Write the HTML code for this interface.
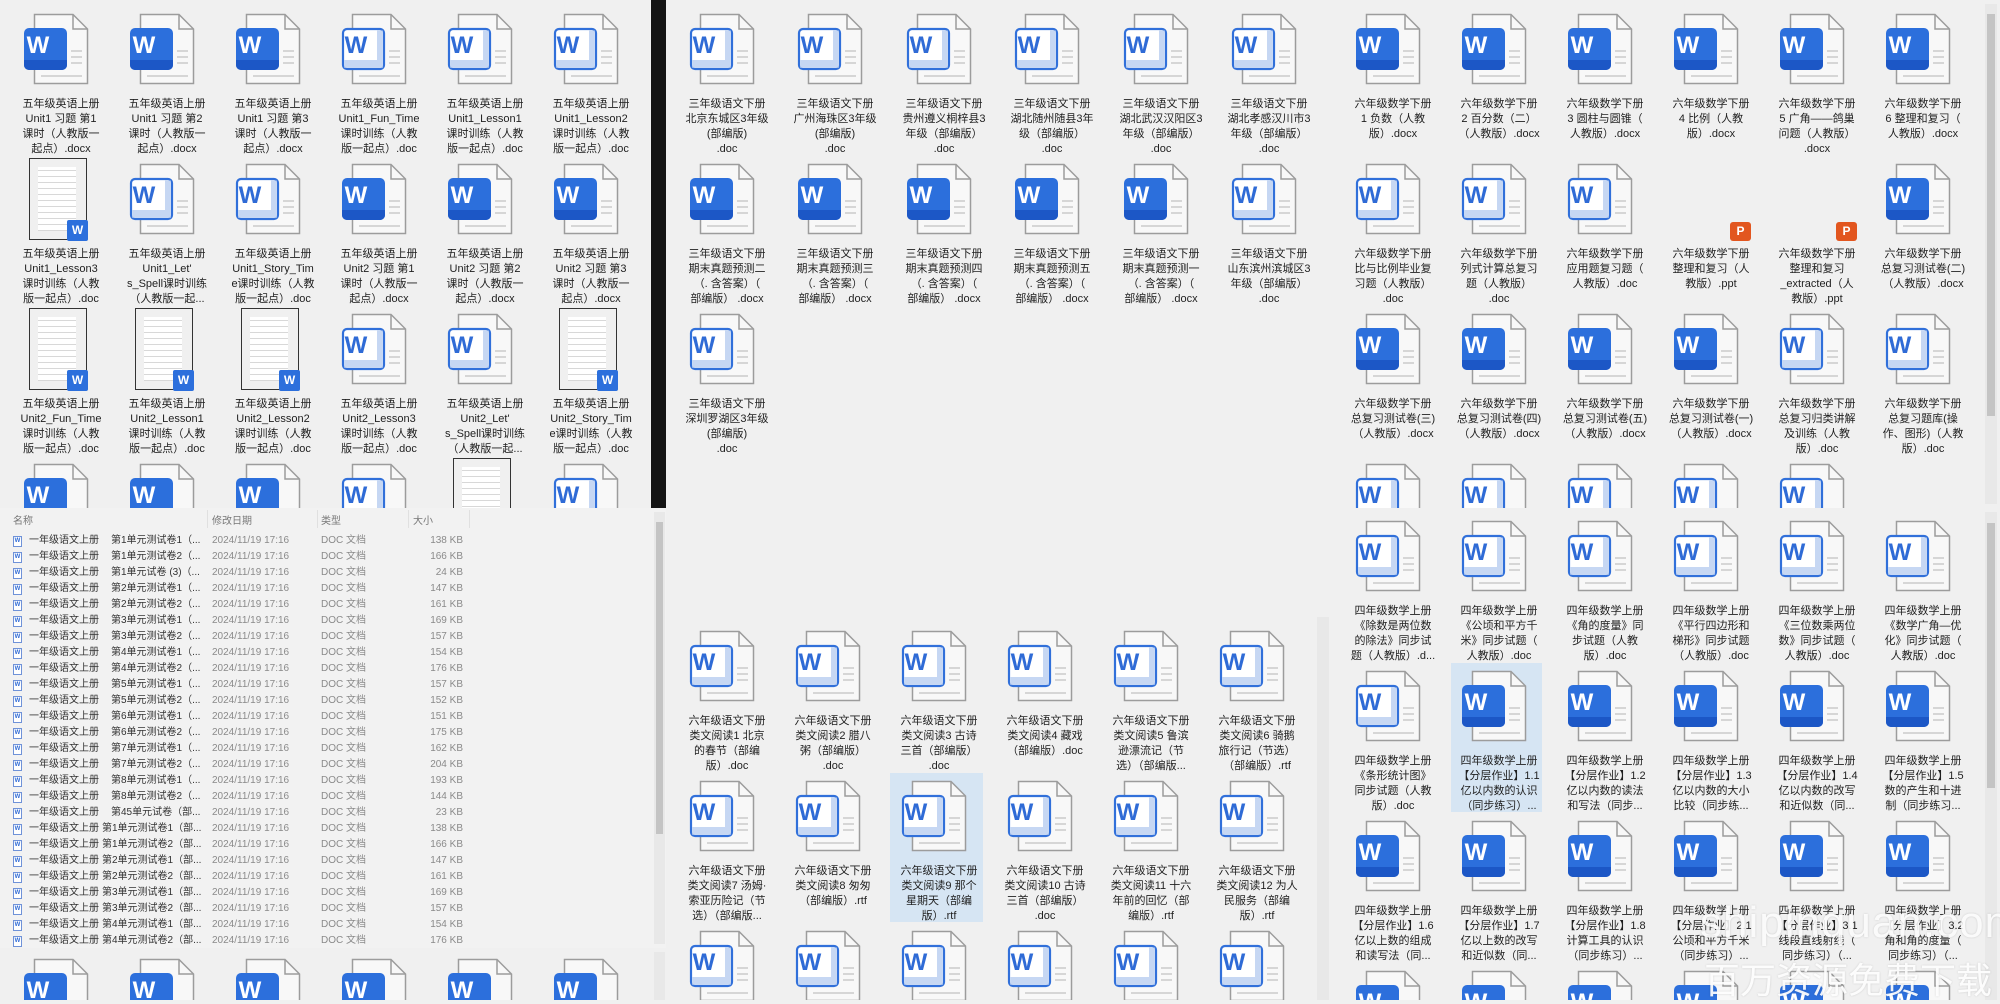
<!DOCTYPE html>
<html><head><meta charset="utf-8">
<style>
*{margin:0;padding:0;box-sizing:border-box}
html,body{width:2000px;height:1000px;overflow:hidden;background:#f0f0f0;font-family:"Liberation Sans","Noto Sans CJK SC",sans-serif}
.c{position:absolute;overflow:hidden;background:#f0f0f0}
.t{position:absolute;width:106px;height:150px}
.i{position:absolute;left:15px;top:0;width:66px;height:72px;overflow:visible}
.pg{fill:#f8f8f8;stroke:#9c9c9c;stroke-width:1.5}
.fd{fill:none;stroke:#9c9c9c;stroke-width:1.5}
.ln{stroke:#d6d6d6;stroke-width:2}
.w1{font:bold 24px "Liberation Sans",sans-serif;fill:#fff;text-anchor:middle}
.w2{font:bold 24px "Liberation Sans",sans-serif;fill:#2f6bd6;text-anchor:middle}
.l{position:absolute;top:84px;left:3px;width:100px;text-align:center;font-size:11px;line-height:15px;color:#1f1f1f;white-space:nowrap}
.th{position:absolute;left:21px;top:-5px;width:58px;height:82px;border:1px solid #333;background:#fff repeating-linear-gradient(#fff 0 5px,#d8d8d8 5px 6px);background-clip:content-box;padding:8px 10px 8px 8px}
.tb{position:absolute;left:59px;top:57px;width:21px;height:21px;background:#2c6fdc;color:#fff;font:bold 12px "Liberation Sans",sans-serif;text-align:center;line-height:21px;border-radius:2px}
.pp{position:absolute;left:72px;top:59px;width:21px;height:19px;background:#e2561f;color:#fff;font:bold 12px "Liberation Sans",sans-serif;text-align:center;line-height:19px;border-radius:3px}
.sel{position:absolute;background:#d6e5f3}
.sb{position:absolute;background:#e8e8e8}
.sbt{position:absolute;background:#c4c4c4}
.hd{position:absolute;top:512px;font-size:10px;color:#777}
.r{position:absolute;left:0;width:651px;height:16px;font-size:10px;line-height:16px;white-space:nowrap}
.r span{position:absolute}
.fi{left:13px;top:3px;width:9px;height:11px;border:1px solid #6f92d8;background:#fff;font:bold 6px "Liberation Sans",sans-serif;color:#2f6bd6;text-align:center;line-height:9px}
.n1{left:29px;color:#333}
.n2{color:#333}
.d{left:212px;color:#8a8a8a}
.ty{left:321px;color:#8a8a8a}
.sz{left:420px;width:43px;text-align:right;color:#8a8a8a}
</style></head><body>

<!-- LEFT TOP -->
<div class="c" style="left:0;top:0;width:651px;height:508px">
<div class="t" style="left:8px;top:13px"><svg class="i" viewBox="-10 0 66 72"><path class="pg" d="M1.5 1.5H40L54.5 16V70.5H1.5Z"/><path class="fd" d="M40 1.5V16H54.5"/><path class="ln" d="M38 38h11M38 44h11M38 50h11M8 63h41"/><rect x="-9" y="15" width="43" height="42" rx="5" fill="#2c6fdc"/><path d="M-9 47h43v5a5 5 0 0 1-5 5h-33a5 5 0 0 1-5-5z" fill="#1c57c6"/><text x="5" y="40" class="w1">W</text></svg><div class="l">五年级英语上册<br>Unit1 习题 第1<br>课时（人教版一<br>起点）.docx</div></div>
<div class="t" style="left:114px;top:13px"><svg class="i" viewBox="-10 0 66 72"><path class="pg" d="M1.5 1.5H40L54.5 16V70.5H1.5Z"/><path class="fd" d="M40 1.5V16H54.5"/><path class="ln" d="M38 38h11M38 44h11M38 50h11M8 63h41"/><rect x="-9" y="15" width="43" height="42" rx="5" fill="#2c6fdc"/><path d="M-9 47h43v5a5 5 0 0 1-5 5h-33a5 5 0 0 1-5-5z" fill="#1c57c6"/><text x="5" y="40" class="w1">W</text></svg><div class="l">五年级英语上册<br>Unit1 习题 第2<br>课时（人教版一<br>起点）.docx</div></div>
<div class="t" style="left:220px;top:13px"><svg class="i" viewBox="-10 0 66 72"><path class="pg" d="M1.5 1.5H40L54.5 16V70.5H1.5Z"/><path class="fd" d="M40 1.5V16H54.5"/><path class="ln" d="M38 38h11M38 44h11M38 50h11M8 63h41"/><rect x="-9" y="15" width="43" height="42" rx="5" fill="#2c6fdc"/><path d="M-9 47h43v5a5 5 0 0 1-5 5h-33a5 5 0 0 1-5-5z" fill="#1c57c6"/><text x="5" y="40" class="w1">W</text></svg><div class="l">五年级英语上册<br>Unit1 习题 第3<br>课时（人教版一<br>起点）.docx</div></div>
<div class="t" style="left:326px;top:13px"><svg class="i" viewBox="-10 0 66 72"><path class="pg" d="M1.5 1.5H40L54.5 16V70.5H1.5Z"/><path class="fd" d="M40 1.5V16H54.5"/><path class="ln" d="M38 38h11M38 44h11M38 50h11M8 63h41"/><rect x="-8" y="16" width="41" height="40" rx="4" fill="#fff" stroke="#3170da" stroke-width="2.2"/><path d="M26 17.5h5.8v37.3h-38.6v-7.8h32.8z" fill="#c6d7f3"/><text x="5" y="40" class="w2">W</text></svg><div class="l">五年级英语上册<br>Unit1_Fun_Time<br>课时训练（人教<br>版一起点）.doc</div></div>
<div class="t" style="left:432px;top:13px"><svg class="i" viewBox="-10 0 66 72"><path class="pg" d="M1.5 1.5H40L54.5 16V70.5H1.5Z"/><path class="fd" d="M40 1.5V16H54.5"/><path class="ln" d="M38 38h11M38 44h11M38 50h11M8 63h41"/><rect x="-8" y="16" width="41" height="40" rx="4" fill="#fff" stroke="#3170da" stroke-width="2.2"/><path d="M26 17.5h5.8v37.3h-38.6v-7.8h32.8z" fill="#c6d7f3"/><text x="5" y="40" class="w2">W</text></svg><div class="l">五年级英语上册<br>Unit1_Lesson1<br>课时训练（人教<br>版一起点）.doc</div></div>
<div class="t" style="left:538px;top:13px"><svg class="i" viewBox="-10 0 66 72"><path class="pg" d="M1.5 1.5H40L54.5 16V70.5H1.5Z"/><path class="fd" d="M40 1.5V16H54.5"/><path class="ln" d="M38 38h11M38 44h11M38 50h11M8 63h41"/><rect x="-8" y="16" width="41" height="40" rx="4" fill="#fff" stroke="#3170da" stroke-width="2.2"/><path d="M26 17.5h5.8v37.3h-38.6v-7.8h32.8z" fill="#c6d7f3"/><text x="5" y="40" class="w2">W</text></svg><div class="l">五年级英语上册<br>Unit1_Lesson2<br>课时训练（人教<br>版一起点）.doc</div></div>

<div class="t" style="left:8px;top:163px"><div class="th"></div><div class="tb">W</div><div class="l">五年级英语上册<br>Unit1_Lesson3<br>课时训练（人教<br>版一起点）.doc</div></div>
<div class="t" style="left:114px;top:163px"><svg class="i" viewBox="-10 0 66 72"><path class="pg" d="M1.5 1.5H40L54.5 16V70.5H1.5Z"/><path class="fd" d="M40 1.5V16H54.5"/><path class="ln" d="M38 38h11M38 44h11M38 50h11M8 63h41"/><rect x="-8" y="16" width="41" height="40" rx="4" fill="#fff" stroke="#3170da" stroke-width="2.2"/><path d="M26 17.5h5.8v37.3h-38.6v-7.8h32.8z" fill="#c6d7f3"/><text x="5" y="40" class="w2">W</text></svg><div class="l">五年级英语上册<br>Unit1_Let'<br>s_Spell课时训练<br>（人教版一起...</div></div>
<div class="t" style="left:220px;top:163px"><svg class="i" viewBox="-10 0 66 72"><path class="pg" d="M1.5 1.5H40L54.5 16V70.5H1.5Z"/><path class="fd" d="M40 1.5V16H54.5"/><path class="ln" d="M38 38h11M38 44h11M38 50h11M8 63h41"/><rect x="-8" y="16" width="41" height="40" rx="4" fill="#fff" stroke="#3170da" stroke-width="2.2"/><path d="M26 17.5h5.8v37.3h-38.6v-7.8h32.8z" fill="#c6d7f3"/><text x="5" y="40" class="w2">W</text></svg><div class="l">五年级英语上册<br>Unit1_Story_Tim<br>e课时训练（人教<br>版一起点）.doc</div></div>
<div class="t" style="left:326px;top:163px"><svg class="i" viewBox="-10 0 66 72"><path class="pg" d="M1.5 1.5H40L54.5 16V70.5H1.5Z"/><path class="fd" d="M40 1.5V16H54.5"/><path class="ln" d="M38 38h11M38 44h11M38 50h11M8 63h41"/><rect x="-9" y="15" width="43" height="42" rx="5" fill="#2c6fdc"/><path d="M-9 47h43v5a5 5 0 0 1-5 5h-33a5 5 0 0 1-5-5z" fill="#1c57c6"/><text x="5" y="40" class="w1">W</text></svg><div class="l">五年级英语上册<br>Unit2 习题 第1<br>课时（人教版一<br>起点）.docx</div></div>
<div class="t" style="left:432px;top:163px"><svg class="i" viewBox="-10 0 66 72"><path class="pg" d="M1.5 1.5H40L54.5 16V70.5H1.5Z"/><path class="fd" d="M40 1.5V16H54.5"/><path class="ln" d="M38 38h11M38 44h11M38 50h11M8 63h41"/><rect x="-9" y="15" width="43" height="42" rx="5" fill="#2c6fdc"/><path d="M-9 47h43v5a5 5 0 0 1-5 5h-33a5 5 0 0 1-5-5z" fill="#1c57c6"/><text x="5" y="40" class="w1">W</text></svg><div class="l">五年级英语上册<br>Unit2 习题 第2<br>课时（人教版一<br>起点）.docx</div></div>
<div class="t" style="left:538px;top:163px"><svg class="i" viewBox="-10 0 66 72"><path class="pg" d="M1.5 1.5H40L54.5 16V70.5H1.5Z"/><path class="fd" d="M40 1.5V16H54.5"/><path class="ln" d="M38 38h11M38 44h11M38 50h11M8 63h41"/><rect x="-9" y="15" width="43" height="42" rx="5" fill="#2c6fdc"/><path d="M-9 47h43v5a5 5 0 0 1-5 5h-33a5 5 0 0 1-5-5z" fill="#1c57c6"/><text x="5" y="40" class="w1">W</text></svg><div class="l">五年级英语上册<br>Unit2 习题 第3<br>课时（人教版一<br>起点）.docx</div></div>

<div class="t" style="left:8px;top:313px"><div class="th"></div><div class="tb">W</div><div class="l">五年级英语上册<br>Unit2_Fun_Time<br>课时训练（人教<br>版一起点）.doc</div></div>
<div class="t" style="left:114px;top:313px"><div class="th"></div><div class="tb">W</div><div class="l">五年级英语上册<br>Unit2_Lesson1<br>课时训练（人教<br>版一起点）.doc</div></div>
<div class="t" style="left:220px;top:313px"><div class="th"></div><div class="tb">W</div><div class="l">五年级英语上册<br>Unit2_Lesson2<br>课时训练（人教<br>版一起点）.doc</div></div>
<div class="t" style="left:326px;top:313px"><svg class="i" viewBox="-10 0 66 72"><path class="pg" d="M1.5 1.5H40L54.5 16V70.5H1.5Z"/><path class="fd" d="M40 1.5V16H54.5"/><path class="ln" d="M38 38h11M38 44h11M38 50h11M8 63h41"/><rect x="-8" y="16" width="41" height="40" rx="4" fill="#fff" stroke="#3170da" stroke-width="2.2"/><path d="M26 17.5h5.8v37.3h-38.6v-7.8h32.8z" fill="#c6d7f3"/><text x="5" y="40" class="w2">W</text></svg><div class="l">五年级英语上册<br>Unit2_Lesson3<br>课时训练（人教<br>版一起点）.doc</div></div>
<div class="t" style="left:432px;top:313px"><svg class="i" viewBox="-10 0 66 72"><path class="pg" d="M1.5 1.5H40L54.5 16V70.5H1.5Z"/><path class="fd" d="M40 1.5V16H54.5"/><path class="ln" d="M38 38h11M38 44h11M38 50h11M8 63h41"/><rect x="-8" y="16" width="41" height="40" rx="4" fill="#fff" stroke="#3170da" stroke-width="2.2"/><path d="M26 17.5h5.8v37.3h-38.6v-7.8h32.8z" fill="#c6d7f3"/><text x="5" y="40" class="w2">W</text></svg><div class="l">五年级英语上册<br>Unit2_Let'<br>s_Spell课时训练<br>（人教版一起...</div></div>
<div class="t" style="left:538px;top:313px"><div class="th"></div><div class="tb">W</div><div class="l">五年级英语上册<br>Unit2_Story_Tim<br>e课时训练（人教<br>版一起点）.doc</div></div>

<div class="t" style="left:8px;top:463px"><svg class="i" viewBox="-10 0 66 72"><path class="pg" d="M1.5 1.5H40L54.5 16V70.5H1.5Z"/><path class="fd" d="M40 1.5V16H54.5"/><rect x="-9" y="15" width="43" height="42" rx="5" fill="#2c6fdc"/><text x="5" y="40" class="w1">W</text></svg></div>
<div class="t" style="left:114px;top:463px"><svg class="i" viewBox="-10 0 66 72"><path class="pg" d="M1.5 1.5H40L54.5 16V70.5H1.5Z"/><path class="fd" d="M40 1.5V16H54.5"/><rect x="-9" y="15" width="43" height="42" rx="5" fill="#2c6fdc"/><text x="5" y="40" class="w1">W</text></svg></div>
<div class="t" style="left:220px;top:463px"><svg class="i" viewBox="-10 0 66 72"><path class="pg" d="M1.5 1.5H40L54.5 16V70.5H1.5Z"/><path class="fd" d="M40 1.5V16H54.5"/><rect x="-9" y="15" width="43" height="42" rx="5" fill="#2c6fdc"/><text x="5" y="40" class="w1">W</text></svg></div>
<div class="t" style="left:326px;top:463px"><svg class="i" viewBox="-10 0 66 72"><path class="pg" d="M1.5 1.5H40L54.5 16V70.5H1.5Z"/><path class="fd" d="M40 1.5V16H54.5"/><rect x="-8" y="16" width="41" height="40" rx="4" fill="#fff" stroke="#3170da" stroke-width="2.2"/><path d="M26 17.5h5.8v37.3h-38.6v-7.8h32.8z" fill="#c6d7f3"/><text x="5" y="40" class="w2">W</text></svg></div>
<div class="t" style="left:432px;top:463px"><div class="th" style="top:-5px"></div></div>
<div class="t" style="left:538px;top:463px"><svg class="i" viewBox="-10 0 66 72"><path class="pg" d="M1.5 1.5H40L54.5 16V70.5H1.5Z"/><path class="fd" d="M40 1.5V16H54.5"/><rect x="-8" y="16" width="41" height="40" rx="4" fill="#fff" stroke="#3170da" stroke-width="2.2"/><path d="M26 17.5h5.8v37.3h-38.6v-7.8h32.8z" fill="#c6d7f3"/><text x="5" y="40" class="w2">W</text></svg></div>
</div>

<!-- black divider -->
<div style="position:absolute;left:651px;top:0;width:15px;height:508px;background:#141414"></div>

<!-- LEFT LIST -->
<div class="c" style="left:0;top:508px;width:666px;height:440px;background:#f2f2f2">
<div class="sb" style="left:654px;top:4px;width:11px;height:432px"></div>
<div class="sbt" style="left:656px;top:14px;width:7px;height:312px"></div>
</div>
<div class="hd" style="left:13px">名称</div>
<div class="hd" style="left:212px">修改日期</div>
<div class="hd" style="left:321px">类型</div>
<div class="hd" style="left:413px">大小</div>
<div style="position:absolute;left:207px;top:510px;width:1px;height:18px;background:#e0e0e0"></div>
<div style="position:absolute;left:317px;top:510px;width:1px;height:18px;background:#e0e0e0"></div>
<div style="position:absolute;left:408px;top:510px;width:1px;height:18px;background:#e0e0e0"></div>
<div style="position:absolute;left:469px;top:510px;width:1px;height:18px;background:#e0e0e0"></div>

<div class="r" style="top:533px"><span class="fi">W</span><span class="n1">一年级语文上册</span><span class="n2" style="left:111px">第1单元测试卷1（...</span><span class="d">2024/11/19 17:16</span><span class="ty">DOC 文档</span><span class="sz">138 KB</span></div>
<div class="r" style="top:549px"><span class="fi">W</span><span class="n1">一年级语文上册</span><span class="n2" style="left:111px">第1单元测试卷2（...</span><span class="d">2024/11/19 17:16</span><span class="ty">DOC 文档</span><span class="sz">166 KB</span></div>
<div class="r" style="top:565px"><span class="fi">W</span><span class="n1">一年级语文上册</span><span class="n2" style="left:111px">第1单元试卷 (3)（...</span><span class="d">2024/11/19 17:16</span><span class="ty">DOC 文档</span><span class="sz">24 KB</span></div>
<div class="r" style="top:581px"><span class="fi">W</span><span class="n1">一年级语文上册</span><span class="n2" style="left:111px">第2单元测试卷1（...</span><span class="d">2024/11/19 17:16</span><span class="ty">DOC 文档</span><span class="sz">147 KB</span></div>
<div class="r" style="top:597px"><span class="fi">W</span><span class="n1">一年级语文上册</span><span class="n2" style="left:111px">第2单元测试卷2（...</span><span class="d">2024/11/19 17:16</span><span class="ty">DOC 文档</span><span class="sz">161 KB</span></div>
<div class="r" style="top:613px"><span class="fi">W</span><span class="n1">一年级语文上册</span><span class="n2" style="left:111px">第3单元测试卷1（...</span><span class="d">2024/11/19 17:16</span><span class="ty">DOC 文档</span><span class="sz">169 KB</span></div>
<div class="r" style="top:629px"><span class="fi">W</span><span class="n1">一年级语文上册</span><span class="n2" style="left:111px">第3单元测试卷2（...</span><span class="d">2024/11/19 17:16</span><span class="ty">DOC 文档</span><span class="sz">157 KB</span></div>
<div class="r" style="top:645px"><span class="fi">W</span><span class="n1">一年级语文上册</span><span class="n2" style="left:111px">第4单元测试卷1（...</span><span class="d">2024/11/19 17:16</span><span class="ty">DOC 文档</span><span class="sz">154 KB</span></div>
<div class="r" style="top:661px"><span class="fi">W</span><span class="n1">一年级语文上册</span><span class="n2" style="left:111px">第4单元测试卷2（...</span><span class="d">2024/11/19 17:16</span><span class="ty">DOC 文档</span><span class="sz">176 KB</span></div>
<div class="r" style="top:677px"><span class="fi">W</span><span class="n1">一年级语文上册</span><span class="n2" style="left:111px">第5单元测试卷1（...</span><span class="d">2024/11/19 17:16</span><span class="ty">DOC 文档</span><span class="sz">157 KB</span></div>
<div class="r" style="top:693px"><span class="fi">W</span><span class="n1">一年级语文上册</span><span class="n2" style="left:111px">第5单元测试卷2（...</span><span class="d">2024/11/19 17:16</span><span class="ty">DOC 文档</span><span class="sz">152 KB</span></div>
<div class="r" style="top:709px"><span class="fi">W</span><span class="n1">一年级语文上册</span><span class="n2" style="left:111px">第6单元测试卷1（...</span><span class="d">2024/11/19 17:16</span><span class="ty">DOC 文档</span><span class="sz">151 KB</span></div>
<div class="r" style="top:725px"><span class="fi">W</span><span class="n1">一年级语文上册</span><span class="n2" style="left:111px">第6单元测试卷2（...</span><span class="d">2024/11/19 17:16</span><span class="ty">DOC 文档</span><span class="sz">175 KB</span></div>
<div class="r" style="top:741px"><span class="fi">W</span><span class="n1">一年级语文上册</span><span class="n2" style="left:111px">第7单元测试卷1（...</span><span class="d">2024/11/19 17:16</span><span class="ty">DOC 文档</span><span class="sz">162 KB</span></div>
<div class="r" style="top:757px"><span class="fi">W</span><span class="n1">一年级语文上册</span><span class="n2" style="left:111px">第7单元测试卷2（...</span><span class="d">2024/11/19 17:16</span><span class="ty">DOC 文档</span><span class="sz">204 KB</span></div>
<div class="r" style="top:773px"><span class="fi">W</span><span class="n1">一年级语文上册</span><span class="n2" style="left:111px">第8单元测试卷1（...</span><span class="d">2024/11/19 17:16</span><span class="ty">DOC 文档</span><span class="sz">193 KB</span></div>
<div class="r" style="top:789px"><span class="fi">W</span><span class="n1">一年级语文上册</span><span class="n2" style="left:111px">第8单元测试卷2（...</span><span class="d">2024/11/19 17:16</span><span class="ty">DOC 文档</span><span class="sz">144 KB</span></div>
<div class="r" style="top:805px"><span class="fi">W</span><span class="n1">一年级语文上册</span><span class="n2" style="left:111px">第45单元试卷（部...</span><span class="d">2024/11/19 17:16</span><span class="ty">DOC 文档</span><span class="sz">23 KB</span></div>
<div class="r" style="top:821px"><span class="fi">W</span><span class="n1">一年级语文上册</span><span class="n2" style="left:102px">第1单元测试卷1（部...</span><span class="d">2024/11/19 17:16</span><span class="ty">DOC 文档</span><span class="sz">138 KB</span></div>
<div class="r" style="top:837px"><span class="fi">W</span><span class="n1">一年级语文上册</span><span class="n2" style="left:102px">第1单元测试卷2（部...</span><span class="d">2024/11/19 17:16</span><span class="ty">DOC 文档</span><span class="sz">166 KB</span></div>
<div class="r" style="top:853px"><span class="fi">W</span><span class="n1">一年级语文上册</span><span class="n2" style="left:102px">第2单元测试卷1（部...</span><span class="d">2024/11/19 17:16</span><span class="ty">DOC 文档</span><span class="sz">147 KB</span></div>
<div class="r" style="top:869px"><span class="fi">W</span><span class="n1">一年级语文上册</span><span class="n2" style="left:102px">第2单元测试卷2（部...</span><span class="d">2024/11/19 17:16</span><span class="ty">DOC 文档</span><span class="sz">161 KB</span></div>
<div class="r" style="top:885px"><span class="fi">W</span><span class="n1">一年级语文上册</span><span class="n2" style="left:102px">第3单元测试卷1（部...</span><span class="d">2024/11/19 17:16</span><span class="ty">DOC 文档</span><span class="sz">169 KB</span></div>
<div class="r" style="top:901px"><span class="fi">W</span><span class="n1">一年级语文上册</span><span class="n2" style="left:102px">第3单元测试卷2（部...</span><span class="d">2024/11/19 17:16</span><span class="ty">DOC 文档</span><span class="sz">157 KB</span></div>
<div class="r" style="top:917px"><span class="fi">W</span><span class="n1">一年级语文上册</span><span class="n2" style="left:102px">第4单元测试卷1（部...</span><span class="d">2024/11/19 17:16</span><span class="ty">DOC 文档</span><span class="sz">154 KB</span></div>
<div class="r" style="top:933px"><span class="fi">W</span><span class="n1">一年级语文上册</span><span class="n2" style="left:102px">第4单元测试卷2（部...</span><span class="d">2024/11/19 17:16</span><span class="ty">DOC 文档</span><span class="sz">176 KB</span></div>

<!-- LEFT BOTTOM -->
<div class="c" style="left:0;top:948px;width:666px;height:52px">
<div class="sb" style="left:654px;top:4px;width:11px;height:48px"></div>
<div class="t" style="left:8px;top:10px"><svg class="i" viewBox="-10 0 66 72"><path class="pg" d="M1.5 1.5H40L54.5 16V70.5H1.5Z"/><path class="fd" d="M40 1.5V16H54.5"/><rect x="-9" y="15" width="43" height="42" rx="5" fill="#2c6fdc"/><text x="5" y="40" class="w1">W</text></svg></div>
<div class="t" style="left:114px;top:10px"><svg class="i" viewBox="-10 0 66 72"><path class="pg" d="M1.5 1.5H40L54.5 16V70.5H1.5Z"/><path class="fd" d="M40 1.5V16H54.5"/><rect x="-9" y="15" width="43" height="42" rx="5" fill="#2c6fdc"/><text x="5" y="40" class="w1">W</text></svg></div>
<div class="t" style="left:220px;top:10px"><svg class="i" viewBox="-10 0 66 72"><path class="pg" d="M1.5 1.5H40L54.5 16V70.5H1.5Z"/><path class="fd" d="M40 1.5V16H54.5"/><rect x="-9" y="15" width="43" height="42" rx="5" fill="#2c6fdc"/><text x="5" y="40" class="w1">W</text></svg></div>
<div class="t" style="left:326px;top:10px"><svg class="i" viewBox="-10 0 66 72"><path class="pg" d="M1.5 1.5H40L54.5 16V70.5H1.5Z"/><path class="fd" d="M40 1.5V16H54.5"/><rect x="-9" y="15" width="43" height="42" rx="5" fill="#2c6fdc"/><text x="5" y="40" class="w1">W</text></svg></div>
<div class="t" style="left:432px;top:10px"><svg class="i" viewBox="-10 0 66 72"><path class="pg" d="M1.5 1.5H40L54.5 16V70.5H1.5Z"/><path class="fd" d="M40 1.5V16H54.5"/><rect x="-9" y="15" width="43" height="42" rx="5" fill="#2c6fdc"/><text x="5" y="40" class="w1">W</text></svg></div>
<div class="t" style="left:538px;top:10px"><svg class="i" viewBox="-10 0 66 72"><path class="pg" d="M1.5 1.5H40L54.5 16V70.5H1.5Z"/><path class="fd" d="M40 1.5V16H54.5"/><rect x="-9" y="15" width="43" height="42" rx="5" fill="#2c6fdc"/><text x="5" y="40" class="w1">W</text></svg></div>
</div>

<!-- MIDDLE -->
<div class="c" style="left:666px;top:0;width:667px;height:1000px">
<div class="sb" style="left:651px;top:617px;width:12px;height:383px"></div>
<div class="sel" style="left:224px;top:773px;width:93px;height:149px"></div>
<!-- top rows (relative left = abs-666) -->
<div class="t" style="left:8px;top:13px"><svg class="i" viewBox="-10 0 66 72"><path class="pg" d="M1.5 1.5H40L54.5 16V70.5H1.5Z"/><path class="fd" d="M40 1.5V16H54.5"/><path class="ln" d="M38 38h11M38 44h11M38 50h11M8 63h41"/><rect x="-8" y="16" width="41" height="40" rx="4" fill="#fff" stroke="#3170da" stroke-width="2.2"/><path d="M26 17.5h5.8v37.3h-38.6v-7.8h32.8z" fill="#c6d7f3"/><text x="5" y="40" class="w2">W</text></svg><div class="l">三年级语文下册<br>北京东城区3年级<br>(部编版)<br>.doc</div></div>
<div class="t" style="left:116px;top:13px"><svg class="i" viewBox="-10 0 66 72"><path class="pg" d="M1.5 1.5H40L54.5 16V70.5H1.5Z"/><path class="fd" d="M40 1.5V16H54.5"/><path class="ln" d="M38 38h11M38 44h11M38 50h11M8 63h41"/><rect x="-8" y="16" width="41" height="40" rx="4" fill="#fff" stroke="#3170da" stroke-width="2.2"/><path d="M26 17.5h5.8v37.3h-38.6v-7.8h32.8z" fill="#c6d7f3"/><text x="5" y="40" class="w2">W</text></svg><div class="l">三年级语文下册<br>广州海珠区3年级<br>(部编版)<br>.doc</div></div>
<div class="t" style="left:225px;top:13px"><svg class="i" viewBox="-10 0 66 72"><path class="pg" d="M1.5 1.5H40L54.5 16V70.5H1.5Z"/><path class="fd" d="M40 1.5V16H54.5"/><path class="ln" d="M38 38h11M38 44h11M38 50h11M8 63h41"/><rect x="-8" y="16" width="41" height="40" rx="4" fill="#fff" stroke="#3170da" stroke-width="2.2"/><path d="M26 17.5h5.8v37.3h-38.6v-7.8h32.8z" fill="#c6d7f3"/><text x="5" y="40" class="w2">W</text></svg><div class="l">三年级语文下册<br>贵州遵义桐梓县3<br>年级（部编版）<br>.doc</div></div>
<div class="t" style="left:333px;top:13px"><svg class="i" viewBox="-10 0 66 72"><path class="pg" d="M1.5 1.5H40L54.5 16V70.5H1.5Z"/><path class="fd" d="M40 1.5V16H54.5"/><path class="ln" d="M38 38h11M38 44h11M38 50h11M8 63h41"/><rect x="-8" y="16" width="41" height="40" rx="4" fill="#fff" stroke="#3170da" stroke-width="2.2"/><path d="M26 17.5h5.8v37.3h-38.6v-7.8h32.8z" fill="#c6d7f3"/><text x="5" y="40" class="w2">W</text></svg><div class="l">三年级语文下册<br>湖北随州随县3年<br>级（部编版）<br>.doc</div></div>
<div class="t" style="left:442px;top:13px"><svg class="i" viewBox="-10 0 66 72"><path class="pg" d="M1.5 1.5H40L54.5 16V70.5H1.5Z"/><path class="fd" d="M40 1.5V16H54.5"/><path class="ln" d="M38 38h11M38 44h11M38 50h11M8 63h41"/><rect x="-8" y="16" width="41" height="40" rx="4" fill="#fff" stroke="#3170da" stroke-width="2.2"/><path d="M26 17.5h5.8v37.3h-38.6v-7.8h32.8z" fill="#c6d7f3"/><text x="5" y="40" class="w2">W</text></svg><div class="l">三年级语文下册<br>湖北武汉汉阳区3<br>年级（部编版）<br>.doc</div></div>
<div class="t" style="left:550px;top:13px"><svg class="i" viewBox="-10 0 66 72"><path class="pg" d="M1.5 1.5H40L54.5 16V70.5H1.5Z"/><path class="fd" d="M40 1.5V16H54.5"/><path class="ln" d="M38 38h11M38 44h11M38 50h11M8 63h41"/><rect x="-8" y="16" width="41" height="40" rx="4" fill="#fff" stroke="#3170da" stroke-width="2.2"/><path d="M26 17.5h5.8v37.3h-38.6v-7.8h32.8z" fill="#c6d7f3"/><text x="5" y="40" class="w2">W</text></svg><div class="l">三年级语文下册<br>湖北孝感汉川市3<br>年级（部编版）<br>.doc</div></div>

<div class="t" style="left:8px;top:163px"><svg class="i" viewBox="-10 0 66 72"><path class="pg" d="M1.5 1.5H40L54.5 16V70.5H1.5Z"/><path class="fd" d="M40 1.5V16H54.5"/><path class="ln" d="M38 38h11M38 44h11M38 50h11M8 63h41"/><rect x="-9" y="15" width="43" height="42" rx="5" fill="#2c6fdc"/><path d="M-9 47h43v5a5 5 0 0 1-5 5h-33a5 5 0 0 1-5-5z" fill="#1c57c6"/><text x="5" y="40" class="w1">W</text></svg><div class="l">三年级语文下册<br>期末真题预测二<br>（. 含答案）（<br>部编版） .docx</div></div>
<div class="t" style="left:116px;top:163px"><svg class="i" viewBox="-10 0 66 72"><path class="pg" d="M1.5 1.5H40L54.5 16V70.5H1.5Z"/><path class="fd" d="M40 1.5V16H54.5"/><path class="ln" d="M38 38h11M38 44h11M38 50h11M8 63h41"/><rect x="-9" y="15" width="43" height="42" rx="5" fill="#2c6fdc"/><path d="M-9 47h43v5a5 5 0 0 1-5 5h-33a5 5 0 0 1-5-5z" fill="#1c57c6"/><text x="5" y="40" class="w1">W</text></svg><div class="l">三年级语文下册<br>期末真题预测三<br>（. 含答案）（<br>部编版） .docx</div></div>
<div class="t" style="left:225px;top:163px"><svg class="i" viewBox="-10 0 66 72"><path class="pg" d="M1.5 1.5H40L54.5 16V70.5H1.5Z"/><path class="fd" d="M40 1.5V16H54.5"/><path class="ln" d="M38 38h11M38 44h11M38 50h11M8 63h41"/><rect x="-9" y="15" width="43" height="42" rx="5" fill="#2c6fdc"/><path d="M-9 47h43v5a5 5 0 0 1-5 5h-33a5 5 0 0 1-5-5z" fill="#1c57c6"/><text x="5" y="40" class="w1">W</text></svg><div class="l">三年级语文下册<br>期末真题预测四<br>（. 含答案）（<br>部编版） .docx</div></div>
<div class="t" style="left:333px;top:163px"><svg class="i" viewBox="-10 0 66 72"><path class="pg" d="M1.5 1.5H40L54.5 16V70.5H1.5Z"/><path class="fd" d="M40 1.5V16H54.5"/><path class="ln" d="M38 38h11M38 44h11M38 50h11M8 63h41"/><rect x="-9" y="15" width="43" height="42" rx="5" fill="#2c6fdc"/><path d="M-9 47h43v5a5 5 0 0 1-5 5h-33a5 5 0 0 1-5-5z" fill="#1c57c6"/><text x="5" y="40" class="w1">W</text></svg><div class="l">三年级语文下册<br>期末真题预测五<br>（. 含答案）（<br>部编版） .docx</div></div>
<div class="t" style="left:442px;top:163px"><svg class="i" viewBox="-10 0 66 72"><path class="pg" d="M1.5 1.5H40L54.5 16V70.5H1.5Z"/><path class="fd" d="M40 1.5V16H54.5"/><path class="ln" d="M38 38h11M38 44h11M38 50h11M8 63h41"/><rect x="-9" y="15" width="43" height="42" rx="5" fill="#2c6fdc"/><path d="M-9 47h43v5a5 5 0 0 1-5 5h-33a5 5 0 0 1-5-5z" fill="#1c57c6"/><text x="5" y="40" class="w1">W</text></svg><div class="l">三年级语文下册<br>期末真题预测一<br>（. 含答案）（<br>部编版） .docx</div></div>
<div class="t" style="left:550px;top:163px"><svg class="i" viewBox="-10 0 66 72"><path class="pg" d="M1.5 1.5H40L54.5 16V70.5H1.5Z"/><path class="fd" d="M40 1.5V16H54.5"/><path class="ln" d="M38 38h11M38 44h11M38 50h11M8 63h41"/><rect x="-8" y="16" width="41" height="40" rx="4" fill="#fff" stroke="#3170da" stroke-width="2.2"/><path d="M26 17.5h5.8v37.3h-38.6v-7.8h32.8z" fill="#c6d7f3"/><text x="5" y="40" class="w2">W</text></svg><div class="l">三年级语文下册<br>山东滨州滨城区3<br>年级（部编版）<br>.doc</div></div>

<div class="t" style="left:8px;top:313px"><svg class="i" viewBox="-10 0 66 72"><path class="pg" d="M1.5 1.5H40L54.5 16V70.5H1.5Z"/><path class="fd" d="M40 1.5V16H54.5"/><path class="ln" d="M38 38h11M38 44h11M38 50h11M8 63h41"/><rect x="-8" y="16" width="41" height="40" rx="4" fill="#fff" stroke="#3170da" stroke-width="2.2"/><path d="M26 17.5h5.8v37.3h-38.6v-7.8h32.8z" fill="#c6d7f3"/><text x="5" y="40" class="w2">W</text></svg><div class="l">三年级语文下册<br>深圳罗湖区3年级<br>(部编版)<br>.doc</div></div>

<!-- bottom rows -->
<div class="t" style="left:8px;top:630px"><svg class="i" viewBox="-10 0 66 72"><path class="pg" d="M1.5 1.5H40L54.5 16V70.5H1.5Z"/><path class="fd" d="M40 1.5V16H54.5"/><path class="ln" d="M38 38h11M38 44h11M38 50h11M8 63h41"/><rect x="-8" y="16" width="41" height="40" rx="4" fill="#fff" stroke="#3170da" stroke-width="2.2"/><path d="M26 17.5h5.8v37.3h-38.6v-7.8h32.8z" fill="#c6d7f3"/><text x="5" y="40" class="w2">W</text></svg><div class="l">六年级语文下册<br>类文阅读1 北京<br>的春节（部编<br>版）.doc</div></div>
<div class="t" style="left:114px;top:630px"><svg class="i" viewBox="-10 0 66 72"><path class="pg" d="M1.5 1.5H40L54.5 16V70.5H1.5Z"/><path class="fd" d="M40 1.5V16H54.5"/><path class="ln" d="M38 38h11M38 44h11M38 50h11M8 63h41"/><rect x="-8" y="16" width="41" height="40" rx="4" fill="#fff" stroke="#3170da" stroke-width="2.2"/><path d="M26 17.5h5.8v37.3h-38.6v-7.8h32.8z" fill="#c6d7f3"/><text x="5" y="40" class="w2">W</text></svg><div class="l">六年级语文下册<br>类文阅读2 腊八<br>粥（部编版）<br>.doc</div></div>
<div class="t" style="left:220px;top:630px"><svg class="i" viewBox="-10 0 66 72"><path class="pg" d="M1.5 1.5H40L54.5 16V70.5H1.5Z"/><path class="fd" d="M40 1.5V16H54.5"/><path class="ln" d="M38 38h11M38 44h11M38 50h11M8 63h41"/><rect x="-8" y="16" width="41" height="40" rx="4" fill="#fff" stroke="#3170da" stroke-width="2.2"/><path d="M26 17.5h5.8v37.3h-38.6v-7.8h32.8z" fill="#c6d7f3"/><text x="5" y="40" class="w2">W</text></svg><div class="l">六年级语文下册<br>类文阅读3 古诗<br>三首（部编版）<br>.doc</div></div>
<div class="t" style="left:326px;top:630px"><svg class="i" viewBox="-10 0 66 72"><path class="pg" d="M1.5 1.5H40L54.5 16V70.5H1.5Z"/><path class="fd" d="M40 1.5V16H54.5"/><path class="ln" d="M38 38h11M38 44h11M38 50h11M8 63h41"/><rect x="-8" y="16" width="41" height="40" rx="4" fill="#fff" stroke="#3170da" stroke-width="2.2"/><path d="M26 17.5h5.8v37.3h-38.6v-7.8h32.8z" fill="#c6d7f3"/><text x="5" y="40" class="w2">W</text></svg><div class="l">六年级语文下册<br>类文阅读4 藏戏<br>（部编版）.doc</div></div>
<div class="t" style="left:432px;top:630px"><svg class="i" viewBox="-10 0 66 72"><path class="pg" d="M1.5 1.5H40L54.5 16V70.5H1.5Z"/><path class="fd" d="M40 1.5V16H54.5"/><path class="ln" d="M38 38h11M38 44h11M38 50h11M8 63h41"/><rect x="-8" y="16" width="41" height="40" rx="4" fill="#fff" stroke="#3170da" stroke-width="2.2"/><path d="M26 17.5h5.8v37.3h-38.6v-7.8h32.8z" fill="#c6d7f3"/><text x="5" y="40" class="w2">W</text></svg><div class="l">六年级语文下册<br>类文阅读5 鲁滨<br>逊漂流记（节<br>选）（部编版...</div></div>
<div class="t" style="left:538px;top:630px"><svg class="i" viewBox="-10 0 66 72"><path class="pg" d="M1.5 1.5H40L54.5 16V70.5H1.5Z"/><path class="fd" d="M40 1.5V16H54.5"/><path class="ln" d="M38 38h11M38 44h11M38 50h11M8 63h41"/><rect x="-8" y="16" width="41" height="40" rx="4" fill="#fff" stroke="#3170da" stroke-width="2.2"/><path d="M26 17.5h5.8v37.3h-38.6v-7.8h32.8z" fill="#c6d7f3"/><text x="5" y="40" class="w2">W</text></svg><div class="l">六年级语文下册<br>类文阅读6 骑鹅<br>旅行记（节选）<br>（部编版）.rtf</div></div>

<div class="t" style="left:8px;top:780px"><svg class="i" viewBox="-10 0 66 72"><path class="pg" d="M1.5 1.5H40L54.5 16V70.5H1.5Z"/><path class="fd" d="M40 1.5V16H54.5"/><path class="ln" d="M38 38h11M38 44h11M38 50h11M8 63h41"/><rect x="-8" y="16" width="41" height="40" rx="4" fill="#fff" stroke="#3170da" stroke-width="2.2"/><path d="M26 17.5h5.8v37.3h-38.6v-7.8h32.8z" fill="#c6d7f3"/><text x="5" y="40" class="w2">W</text></svg><div class="l">六年级语文下册<br>类文阅读7 汤姆·<br>索亚历险记（节<br>选）（部编版...</div></div>
<div class="t" style="left:114px;top:780px"><svg class="i" viewBox="-10 0 66 72"><path class="pg" d="M1.5 1.5H40L54.5 16V70.5H1.5Z"/><path class="fd" d="M40 1.5V16H54.5"/><path class="ln" d="M38 38h11M38 44h11M38 50h11M8 63h41"/><rect x="-8" y="16" width="41" height="40" rx="4" fill="#fff" stroke="#3170da" stroke-width="2.2"/><path d="M26 17.5h5.8v37.3h-38.6v-7.8h32.8z" fill="#c6d7f3"/><text x="5" y="40" class="w2">W</text></svg><div class="l">六年级语文下册<br>类文阅读8 匆匆<br>（部编版）.rtf</div></div>
<div class="t" style="left:220px;top:780px"><svg class="i" viewBox="-10 0 66 72"><path class="pg" d="M1.5 1.5H40L54.5 16V70.5H1.5Z"/><path class="fd" d="M40 1.5V16H54.5"/><path class="ln" d="M38 38h11M38 44h11M38 50h11M8 63h41"/><rect x="-8" y="16" width="41" height="40" rx="4" fill="#fff" stroke="#3170da" stroke-width="2.2"/><path d="M26 17.5h5.8v37.3h-38.6v-7.8h32.8z" fill="#c6d7f3"/><text x="5" y="40" class="w2">W</text></svg><div class="l">六年级语文下册<br>类文阅读9 那个<br>星期天（部编<br>版）.rtf</div></div>
<div class="t" style="left:326px;top:780px"><svg class="i" viewBox="-10 0 66 72"><path class="pg" d="M1.5 1.5H40L54.5 16V70.5H1.5Z"/><path class="fd" d="M40 1.5V16H54.5"/><path class="ln" d="M38 38h11M38 44h11M38 50h11M8 63h41"/><rect x="-8" y="16" width="41" height="40" rx="4" fill="#fff" stroke="#3170da" stroke-width="2.2"/><path d="M26 17.5h5.8v37.3h-38.6v-7.8h32.8z" fill="#c6d7f3"/><text x="5" y="40" class="w2">W</text></svg><div class="l">六年级语文下册<br>类文阅读10 古诗<br>三首（部编版）<br>.doc</div></div>
<div class="t" style="left:432px;top:780px"><svg class="i" viewBox="-10 0 66 72"><path class="pg" d="M1.5 1.5H40L54.5 16V70.5H1.5Z"/><path class="fd" d="M40 1.5V16H54.5"/><path class="ln" d="M38 38h11M38 44h11M38 50h11M8 63h41"/><rect x="-8" y="16" width="41" height="40" rx="4" fill="#fff" stroke="#3170da" stroke-width="2.2"/><path d="M26 17.5h5.8v37.3h-38.6v-7.8h32.8z" fill="#c6d7f3"/><text x="5" y="40" class="w2">W</text></svg><div class="l">六年级语文下册<br>类文阅读11 十六<br>年前的回忆（部<br>编版）.rtf</div></div>
<div class="t" style="left:538px;top:780px"><svg class="i" viewBox="-10 0 66 72"><path class="pg" d="M1.5 1.5H40L54.5 16V70.5H1.5Z"/><path class="fd" d="M40 1.5V16H54.5"/><path class="ln" d="M38 38h11M38 44h11M38 50h11M8 63h41"/><rect x="-8" y="16" width="41" height="40" rx="4" fill="#fff" stroke="#3170da" stroke-width="2.2"/><path d="M26 17.5h5.8v37.3h-38.6v-7.8h32.8z" fill="#c6d7f3"/><text x="5" y="40" class="w2">W</text></svg><div class="l">六年级语文下册<br>类文阅读12 为人<br>民服务（部编<br>版）.rtf</div></div>

<div class="t" style="left:8px;top:930px"><svg class="i" viewBox="-10 0 66 72"><path class="pg" d="M1.5 1.5H40L54.5 16V70.5H1.5Z"/><path class="fd" d="M40 1.5V16H54.5"/><path class="ln" d="M38 38h11M38 44h11M38 50h11M8 63h41"/><rect x="-8" y="16" width="41" height="40" rx="4" fill="#fff" stroke="#3170da" stroke-width="2.2"/><path d="M26 17.5h5.8v37.3h-38.6v-7.8h32.8z" fill="#c6d7f3"/><text x="5" y="40" class="w2">W</text></svg></div>
<div class="t" style="left:114px;top:930px"><svg class="i" viewBox="-10 0 66 72"><path class="pg" d="M1.5 1.5H40L54.5 16V70.5H1.5Z"/><path class="fd" d="M40 1.5V16H54.5"/><path class="ln" d="M38 38h11M38 44h11M38 50h11M8 63h41"/><rect x="-8" y="16" width="41" height="40" rx="4" fill="#fff" stroke="#3170da" stroke-width="2.2"/><path d="M26 17.5h5.8v37.3h-38.6v-7.8h32.8z" fill="#c6d7f3"/><text x="5" y="40" class="w2">W</text></svg></div>
<div class="t" style="left:220px;top:930px"><svg class="i" viewBox="-10 0 66 72"><path class="pg" d="M1.5 1.5H40L54.5 16V70.5H1.5Z"/><path class="fd" d="M40 1.5V16H54.5"/><path class="ln" d="M38 38h11M38 44h11M38 50h11M8 63h41"/><rect x="-8" y="16" width="41" height="40" rx="4" fill="#fff" stroke="#3170da" stroke-width="2.2"/><path d="M26 17.5h5.8v37.3h-38.6v-7.8h32.8z" fill="#c6d7f3"/><text x="5" y="40" class="w2">W</text></svg></div>
<div class="t" style="left:326px;top:930px"><svg class="i" viewBox="-10 0 66 72"><path class="pg" d="M1.5 1.5H40L54.5 16V70.5H1.5Z"/><path class="fd" d="M40 1.5V16H54.5"/><path class="ln" d="M38 38h11M38 44h11M38 50h11M8 63h41"/><rect x="-8" y="16" width="41" height="40" rx="4" fill="#fff" stroke="#3170da" stroke-width="2.2"/><path d="M26 17.5h5.8v37.3h-38.6v-7.8h32.8z" fill="#c6d7f3"/><text x="5" y="40" class="w2">W</text></svg></div>
<div class="t" style="left:432px;top:930px"><svg class="i" viewBox="-10 0 66 72"><path class="pg" d="M1.5 1.5H40L54.5 16V70.5H1.5Z"/><path class="fd" d="M40 1.5V16H54.5"/><path class="ln" d="M38 38h11M38 44h11M38 50h11M8 63h41"/><rect x="-8" y="16" width="41" height="40" rx="4" fill="#fff" stroke="#3170da" stroke-width="2.2"/><path d="M26 17.5h5.8v37.3h-38.6v-7.8h32.8z" fill="#c6d7f3"/><text x="5" y="40" class="w2">W</text></svg></div>
<div class="t" style="left:538px;top:930px"><svg class="i" viewBox="-10 0 66 72"><path class="pg" d="M1.5 1.5H40L54.5 16V70.5H1.5Z"/><path class="fd" d="M40 1.5V16H54.5"/><path class="ln" d="M38 38h11M38 44h11M38 50h11M8 63h41"/><rect x="-8" y="16" width="41" height="40" rx="4" fill="#fff" stroke="#3170da" stroke-width="2.2"/><path d="M26 17.5h5.8v37.3h-38.6v-7.8h32.8z" fill="#c6d7f3"/><text x="5" y="40" class="w2">W</text></svg></div>
</div>

<!-- RIGHT TOP -->
<div class="c" style="left:1333px;top:0;width:667px;height:508px">
<div class="sb" style="left:652px;top:4px;width:12px;height:500px"></div>
<div class="sbt" style="left:654px;top:14px;width:8px;height:402px"></div>
<div class="t" style="left:7px;top:13px"><svg class="i" viewBox="-10 0 66 72"><path class="pg" d="M1.5 1.5H40L54.5 16V70.5H1.5Z"/><path class="fd" d="M40 1.5V16H54.5"/><path class="ln" d="M38 38h11M38 44h11M38 50h11M8 63h41"/><rect x="-9" y="15" width="43" height="42" rx="5" fill="#2c6fdc"/><path d="M-9 47h43v5a5 5 0 0 1-5 5h-33a5 5 0 0 1-5-5z" fill="#1c57c6"/><text x="5" y="40" class="w1">W</text></svg><div class="l">六年级数学下册<br>1 负数（人教<br>版）.docx</div></div>
<div class="t" style="left:113px;top:13px"><svg class="i" viewBox="-10 0 66 72"><path class="pg" d="M1.5 1.5H40L54.5 16V70.5H1.5Z"/><path class="fd" d="M40 1.5V16H54.5"/><path class="ln" d="M38 38h11M38 44h11M38 50h11M8 63h41"/><rect x="-9" y="15" width="43" height="42" rx="5" fill="#2c6fdc"/><path d="M-9 47h43v5a5 5 0 0 1-5 5h-33a5 5 0 0 1-5-5z" fill="#1c57c6"/><text x="5" y="40" class="w1">W</text></svg><div class="l">六年级数学下册<br>2 百分数（二）<br>（人教版）.docx</div></div>
<div class="t" style="left:219px;top:13px"><svg class="i" viewBox="-10 0 66 72"><path class="pg" d="M1.5 1.5H40L54.5 16V70.5H1.5Z"/><path class="fd" d="M40 1.5V16H54.5"/><path class="ln" d="M38 38h11M38 44h11M38 50h11M8 63h41"/><rect x="-9" y="15" width="43" height="42" rx="5" fill="#2c6fdc"/><path d="M-9 47h43v5a5 5 0 0 1-5 5h-33a5 5 0 0 1-5-5z" fill="#1c57c6"/><text x="5" y="40" class="w1">W</text></svg><div class="l">六年级数学下册<br>3 圆柱与圆锥（<br>人教版）.docx</div></div>
<div class="t" style="left:325px;top:13px"><svg class="i" viewBox="-10 0 66 72"><path class="pg" d="M1.5 1.5H40L54.5 16V70.5H1.5Z"/><path class="fd" d="M40 1.5V16H54.5"/><path class="ln" d="M38 38h11M38 44h11M38 50h11M8 63h41"/><rect x="-9" y="15" width="43" height="42" rx="5" fill="#2c6fdc"/><path d="M-9 47h43v5a5 5 0 0 1-5 5h-33a5 5 0 0 1-5-5z" fill="#1c57c6"/><text x="5" y="40" class="w1">W</text></svg><div class="l">六年级数学下册<br>4 比例（人教<br>版）.docx</div></div>
<div class="t" style="left:431px;top:13px"><svg class="i" viewBox="-10 0 66 72"><path class="pg" d="M1.5 1.5H40L54.5 16V70.5H1.5Z"/><path class="fd" d="M40 1.5V16H54.5"/><path class="ln" d="M38 38h11M38 44h11M38 50h11M8 63h41"/><rect x="-9" y="15" width="43" height="42" rx="5" fill="#2c6fdc"/><path d="M-9 47h43v5a5 5 0 0 1-5 5h-33a5 5 0 0 1-5-5z" fill="#1c57c6"/><text x="5" y="40" class="w1">W</text></svg><div class="l">六年级数学下册<br>5 广角——鸽巢<br>问题（人教版）<br>.docx</div></div>
<div class="t" style="left:537px;top:13px"><svg class="i" viewBox="-10 0 66 72"><path class="pg" d="M1.5 1.5H40L54.5 16V70.5H1.5Z"/><path class="fd" d="M40 1.5V16H54.5"/><path class="ln" d="M38 38h11M38 44h11M38 50h11M8 63h41"/><rect x="-9" y="15" width="43" height="42" rx="5" fill="#2c6fdc"/><path d="M-9 47h43v5a5 5 0 0 1-5 5h-33a5 5 0 0 1-5-5z" fill="#1c57c6"/><text x="5" y="40" class="w1">W</text></svg><div class="l">六年级数学下册<br>6 整理和复习（<br>人教版）.docx</div></div>

<div class="t" style="left:7px;top:163px"><svg class="i" viewBox="-10 0 66 72"><path class="pg" d="M1.5 1.5H40L54.5 16V70.5H1.5Z"/><path class="fd" d="M40 1.5V16H54.5"/><path class="ln" d="M38 38h11M38 44h11M38 50h11M8 63h41"/><rect x="-8" y="16" width="41" height="40" rx="4" fill="#fff" stroke="#3170da" stroke-width="2.2"/><path d="M26 17.5h5.8v37.3h-38.6v-7.8h32.8z" fill="#c6d7f3"/><text x="5" y="40" class="w2">W</text></svg><div class="l">六年级数学下册<br>比与比例毕业复<br>习题（人教版）<br>.doc</div></div>
<div class="t" style="left:113px;top:163px"><svg class="i" viewBox="-10 0 66 72"><path class="pg" d="M1.5 1.5H40L54.5 16V70.5H1.5Z"/><path class="fd" d="M40 1.5V16H54.5"/><path class="ln" d="M38 38h11M38 44h11M38 50h11M8 63h41"/><rect x="-8" y="16" width="41" height="40" rx="4" fill="#fff" stroke="#3170da" stroke-width="2.2"/><path d="M26 17.5h5.8v37.3h-38.6v-7.8h32.8z" fill="#c6d7f3"/><text x="5" y="40" class="w2">W</text></svg><div class="l">六年级数学下册<br>列式计算总复习<br>题（人教版）<br>.doc</div></div>
<div class="t" style="left:219px;top:163px"><svg class="i" viewBox="-10 0 66 72"><path class="pg" d="M1.5 1.5H40L54.5 16V70.5H1.5Z"/><path class="fd" d="M40 1.5V16H54.5"/><path class="ln" d="M38 38h11M38 44h11M38 50h11M8 63h41"/><rect x="-8" y="16" width="41" height="40" rx="4" fill="#fff" stroke="#3170da" stroke-width="2.2"/><path d="M26 17.5h5.8v37.3h-38.6v-7.8h32.8z" fill="#c6d7f3"/><text x="5" y="40" class="w2">W</text></svg><div class="l">六年级数学下册<br>应用题复习题（<br>人教版）.doc</div></div>
<div class="t" style="left:325px;top:163px"><div class="pp">P</div><div class="l">六年级数学下册<br>整理和复习（人<br>教版）.ppt</div></div>
<div class="t" style="left:431px;top:163px"><div class="pp">P</div><div class="l">六年级数学下册<br>整理和复习<br>_extracted（人<br>教版）.ppt</div></div>
<div class="t" style="left:537px;top:163px"><svg class="i" viewBox="-10 0 66 72"><path class="pg" d="M1.5 1.5H40L54.5 16V70.5H1.5Z"/><path class="fd" d="M40 1.5V16H54.5"/><path class="ln" d="M38 38h11M38 44h11M38 50h11M8 63h41"/><rect x="-9" y="15" width="43" height="42" rx="5" fill="#2c6fdc"/><path d="M-9 47h43v5a5 5 0 0 1-5 5h-33a5 5 0 0 1-5-5z" fill="#1c57c6"/><text x="5" y="40" class="w1">W</text></svg><div class="l">六年级数学下册<br>总复习测试卷(二)<br>（人教版）.docx</div></div>

<div class="t" style="left:7px;top:313px"><svg class="i" viewBox="-10 0 66 72"><path class="pg" d="M1.5 1.5H40L54.5 16V70.5H1.5Z"/><path class="fd" d="M40 1.5V16H54.5"/><path class="ln" d="M38 38h11M38 44h11M38 50h11M8 63h41"/><rect x="-9" y="15" width="43" height="42" rx="5" fill="#2c6fdc"/><path d="M-9 47h43v5a5 5 0 0 1-5 5h-33a5 5 0 0 1-5-5z" fill="#1c57c6"/><text x="5" y="40" class="w1">W</text></svg><div class="l">六年级数学下册<br>总复习测试卷(三)<br>（人教版）.docx</div></div>
<div class="t" style="left:113px;top:313px"><svg class="i" viewBox="-10 0 66 72"><path class="pg" d="M1.5 1.5H40L54.5 16V70.5H1.5Z"/><path class="fd" d="M40 1.5V16H54.5"/><path class="ln" d="M38 38h11M38 44h11M38 50h11M8 63h41"/><rect x="-9" y="15" width="43" height="42" rx="5" fill="#2c6fdc"/><path d="M-9 47h43v5a5 5 0 0 1-5 5h-33a5 5 0 0 1-5-5z" fill="#1c57c6"/><text x="5" y="40" class="w1">W</text></svg><div class="l">六年级数学下册<br>总复习测试卷(四)<br>（人教版）.docx</div></div>
<div class="t" style="left:219px;top:313px"><svg class="i" viewBox="-10 0 66 72"><path class="pg" d="M1.5 1.5H40L54.5 16V70.5H1.5Z"/><path class="fd" d="M40 1.5V16H54.5"/><path class="ln" d="M38 38h11M38 44h11M38 50h11M8 63h41"/><rect x="-9" y="15" width="43" height="42" rx="5" fill="#2c6fdc"/><path d="M-9 47h43v5a5 5 0 0 1-5 5h-33a5 5 0 0 1-5-5z" fill="#1c57c6"/><text x="5" y="40" class="w1">W</text></svg><div class="l">六年级数学下册<br>总复习测试卷(五)<br>（人教版）.docx</div></div>
<div class="t" style="left:325px;top:313px"><svg class="i" viewBox="-10 0 66 72"><path class="pg" d="M1.5 1.5H40L54.5 16V70.5H1.5Z"/><path class="fd" d="M40 1.5V16H54.5"/><path class="ln" d="M38 38h11M38 44h11M38 50h11M8 63h41"/><rect x="-9" y="15" width="43" height="42" rx="5" fill="#2c6fdc"/><path d="M-9 47h43v5a5 5 0 0 1-5 5h-33a5 5 0 0 1-5-5z" fill="#1c57c6"/><text x="5" y="40" class="w1">W</text></svg><div class="l">六年级数学下册<br>总复习测试卷(一)<br>（人教版）.docx</div></div>
<div class="t" style="left:431px;top:313px"><svg class="i" viewBox="-10 0 66 72"><path class="pg" d="M1.5 1.5H40L54.5 16V70.5H1.5Z"/><path class="fd" d="M40 1.5V16H54.5"/><path class="ln" d="M38 38h11M38 44h11M38 50h11M8 63h41"/><rect x="-8" y="16" width="41" height="40" rx="4" fill="#fff" stroke="#3170da" stroke-width="2.2"/><path d="M26 17.5h5.8v37.3h-38.6v-7.8h32.8z" fill="#c6d7f3"/><text x="5" y="40" class="w2">W</text></svg><div class="l">六年级数学下册<br>总复习归类讲解<br>及训练（人教<br>版）.doc</div></div>
<div class="t" style="left:537px;top:313px"><svg class="i" viewBox="-10 0 66 72"><path class="pg" d="M1.5 1.5H40L54.5 16V70.5H1.5Z"/><path class="fd" d="M40 1.5V16H54.5"/><path class="ln" d="M38 38h11M38 44h11M38 50h11M8 63h41"/><rect x="-8" y="16" width="41" height="40" rx="4" fill="#fff" stroke="#3170da" stroke-width="2.2"/><path d="M26 17.5h5.8v37.3h-38.6v-7.8h32.8z" fill="#c6d7f3"/><text x="5" y="40" class="w2">W</text></svg><div class="l">六年级数学下册<br>总复习题库(操<br>作、图形)（人教<br>版）.doc</div></div>

<div class="t" style="left:7px;top:463px"><svg class="i" viewBox="-10 0 66 72"><path class="pg" d="M1.5 1.5H40L54.5 16V70.5H1.5Z"/><path class="fd" d="M40 1.5V16H54.5"/><rect x="-8" y="16" width="41" height="40" rx="4" fill="#fff" stroke="#3170da" stroke-width="2.2"/><path d="M26 17.5h5.8v37.3h-38.6v-7.8h32.8z" fill="#c6d7f3"/><text x="5" y="40" class="w2">W</text></svg></div>
<div class="t" style="left:113px;top:463px"><svg class="i" viewBox="-10 0 66 72"><path class="pg" d="M1.5 1.5H40L54.5 16V70.5H1.5Z"/><path class="fd" d="M40 1.5V16H54.5"/><rect x="-8" y="16" width="41" height="40" rx="4" fill="#fff" stroke="#3170da" stroke-width="2.2"/><path d="M26 17.5h5.8v37.3h-38.6v-7.8h32.8z" fill="#c6d7f3"/><text x="5" y="40" class="w2">W</text></svg></div>
<div class="t" style="left:219px;top:463px"><svg class="i" viewBox="-10 0 66 72"><path class="pg" d="M1.5 1.5H40L54.5 16V70.5H1.5Z"/><path class="fd" d="M40 1.5V16H54.5"/><rect x="-8" y="16" width="41" height="40" rx="4" fill="#fff" stroke="#3170da" stroke-width="2.2"/><path d="M26 17.5h5.8v37.3h-38.6v-7.8h32.8z" fill="#c6d7f3"/><text x="5" y="40" class="w2">W</text></svg></div>
<div class="t" style="left:325px;top:463px"><svg class="i" viewBox="-10 0 66 72"><path class="pg" d="M1.5 1.5H40L54.5 16V70.5H1.5Z"/><path class="fd" d="M40 1.5V16H54.5"/><rect x="-8" y="16" width="41" height="40" rx="4" fill="#fff" stroke="#3170da" stroke-width="2.2"/><path d="M26 17.5h5.8v37.3h-38.6v-7.8h32.8z" fill="#c6d7f3"/><text x="5" y="40" class="w2">W</text></svg></div>
<div class="t" style="left:431px;top:463px"><svg class="i" viewBox="-10 0 66 72"><path class="pg" d="M1.5 1.5H40L54.5 16V70.5H1.5Z"/><path class="fd" d="M40 1.5V16H54.5"/><rect x="-8" y="16" width="41" height="40" rx="4" fill="#fff" stroke="#3170da" stroke-width="2.2"/><path d="M26 17.5h5.8v37.3h-38.6v-7.8h32.8z" fill="#c6d7f3"/><text x="5" y="40" class="w2">W</text></svg></div>
</div>

<!-- RIGHT BOTTOM -->
<div class="c" style="left:1333px;top:508px;width:667px;height:492px">
<div class="sb" style="left:652px;top:4px;width:12px;height:488px"></div>
<div class="sbt" style="left:654px;top:15px;width:8px;height:265px"></div>
<div class="sel" style="left:118px;top:155px;width:91px;height:149px"></div>
<div class="t" style="left:7px;top:12px"><svg class="i" viewBox="-10 0 66 72"><path class="pg" d="M1.5 1.5H40L54.5 16V70.5H1.5Z"/><path class="fd" d="M40 1.5V16H54.5"/><path class="ln" d="M38 38h11M38 44h11M38 50h11M8 63h41"/><rect x="-8" y="16" width="41" height="40" rx="4" fill="#fff" stroke="#3170da" stroke-width="2.2"/><path d="M26 17.5h5.8v37.3h-38.6v-7.8h32.8z" fill="#c6d7f3"/><text x="5" y="40" class="w2">W</text></svg><div class="l">四年级数学上册<br>《除数是两位数<br>的除法》同步试<br>题（人教版）.d...</div></div>
<div class="t" style="left:113px;top:12px"><svg class="i" viewBox="-10 0 66 72"><path class="pg" d="M1.5 1.5H40L54.5 16V70.5H1.5Z"/><path class="fd" d="M40 1.5V16H54.5"/><path class="ln" d="M38 38h11M38 44h11M38 50h11M8 63h41"/><rect x="-8" y="16" width="41" height="40" rx="4" fill="#fff" stroke="#3170da" stroke-width="2.2"/><path d="M26 17.5h5.8v37.3h-38.6v-7.8h32.8z" fill="#c6d7f3"/><text x="5" y="40" class="w2">W</text></svg><div class="l">四年级数学上册<br>《公顷和平方千<br>米》同步试题（<br>人教版）.doc</div></div>
<div class="t" style="left:219px;top:12px"><svg class="i" viewBox="-10 0 66 72"><path class="pg" d="M1.5 1.5H40L54.5 16V70.5H1.5Z"/><path class="fd" d="M40 1.5V16H54.5"/><path class="ln" d="M38 38h11M38 44h11M38 50h11M8 63h41"/><rect x="-8" y="16" width="41" height="40" rx="4" fill="#fff" stroke="#3170da" stroke-width="2.2"/><path d="M26 17.5h5.8v37.3h-38.6v-7.8h32.8z" fill="#c6d7f3"/><text x="5" y="40" class="w2">W</text></svg><div class="l">四年级数学上册<br>《角的度量》同<br>步试题（人教<br>版）.doc</div></div>
<div class="t" style="left:325px;top:12px"><svg class="i" viewBox="-10 0 66 72"><path class="pg" d="M1.5 1.5H40L54.5 16V70.5H1.5Z"/><path class="fd" d="M40 1.5V16H54.5"/><path class="ln" d="M38 38h11M38 44h11M38 50h11M8 63h41"/><rect x="-8" y="16" width="41" height="40" rx="4" fill="#fff" stroke="#3170da" stroke-width="2.2"/><path d="M26 17.5h5.8v37.3h-38.6v-7.8h32.8z" fill="#c6d7f3"/><text x="5" y="40" class="w2">W</text></svg><div class="l">四年级数学上册<br>《平行四边形和<br>梯形》同步试题<br>（人教版）.doc</div></div>
<div class="t" style="left:431px;top:12px"><svg class="i" viewBox="-10 0 66 72"><path class="pg" d="M1.5 1.5H40L54.5 16V70.5H1.5Z"/><path class="fd" d="M40 1.5V16H54.5"/><path class="ln" d="M38 38h11M38 44h11M38 50h11M8 63h41"/><rect x="-8" y="16" width="41" height="40" rx="4" fill="#fff" stroke="#3170da" stroke-width="2.2"/><path d="M26 17.5h5.8v37.3h-38.6v-7.8h32.8z" fill="#c6d7f3"/><text x="5" y="40" class="w2">W</text></svg><div class="l">四年级数学上册<br>《三位数乘两位<br>数》同步试题（<br>人教版）.doc</div></div>
<div class="t" style="left:537px;top:12px"><svg class="i" viewBox="-10 0 66 72"><path class="pg" d="M1.5 1.5H40L54.5 16V70.5H1.5Z"/><path class="fd" d="M40 1.5V16H54.5"/><path class="ln" d="M38 38h11M38 44h11M38 50h11M8 63h41"/><rect x="-8" y="16" width="41" height="40" rx="4" fill="#fff" stroke="#3170da" stroke-width="2.2"/><path d="M26 17.5h5.8v37.3h-38.6v-7.8h32.8z" fill="#c6d7f3"/><text x="5" y="40" class="w2">W</text></svg><div class="l">四年级数学上册<br>《数学广角—优<br>化》同步试题（<br>人教版）.doc</div></div>

<div class="t" style="left:7px;top:162px"><svg class="i" viewBox="-10 0 66 72"><path class="pg" d="M1.5 1.5H40L54.5 16V70.5H1.5Z"/><path class="fd" d="M40 1.5V16H54.5"/><path class="ln" d="M38 38h11M38 44h11M38 50h11M8 63h41"/><rect x="-8" y="16" width="41" height="40" rx="4" fill="#fff" stroke="#3170da" stroke-width="2.2"/><path d="M26 17.5h5.8v37.3h-38.6v-7.8h32.8z" fill="#c6d7f3"/><text x="5" y="40" class="w2">W</text></svg><div class="l">四年级数学上册<br>《条形统计图》<br>同步试题（人教<br>版）.doc</div></div>
<div class="t" style="left:113px;top:162px"><svg class="i" viewBox="-10 0 66 72"><path class="pg" d="M1.5 1.5H40L54.5 16V70.5H1.5Z"/><path class="fd" d="M40 1.5V16H54.5"/><path class="ln" d="M38 38h11M38 44h11M38 50h11M8 63h41"/><rect x="-9" y="15" width="43" height="42" rx="5" fill="#2c6fdc"/><path d="M-9 47h43v5a5 5 0 0 1-5 5h-33a5 5 0 0 1-5-5z" fill="#1c57c6"/><text x="5" y="40" class="w1">W</text></svg><div class="l">四年级数学上册<br>【分层作业】1.1<br>亿以内数的认识<br>（同步练习）...</div></div>
<div class="t" style="left:219px;top:162px"><svg class="i" viewBox="-10 0 66 72"><path class="pg" d="M1.5 1.5H40L54.5 16V70.5H1.5Z"/><path class="fd" d="M40 1.5V16H54.5"/><path class="ln" d="M38 38h11M38 44h11M38 50h11M8 63h41"/><rect x="-9" y="15" width="43" height="42" rx="5" fill="#2c6fdc"/><path d="M-9 47h43v5a5 5 0 0 1-5 5h-33a5 5 0 0 1-5-5z" fill="#1c57c6"/><text x="5" y="40" class="w1">W</text></svg><div class="l">四年级数学上册<br>【分层作业】1.2<br>亿以内数的读法<br>和写法（同步...</div></div>
<div class="t" style="left:325px;top:162px"><svg class="i" viewBox="-10 0 66 72"><path class="pg" d="M1.5 1.5H40L54.5 16V70.5H1.5Z"/><path class="fd" d="M40 1.5V16H54.5"/><path class="ln" d="M38 38h11M38 44h11M38 50h11M8 63h41"/><rect x="-9" y="15" width="43" height="42" rx="5" fill="#2c6fdc"/><path d="M-9 47h43v5a5 5 0 0 1-5 5h-33a5 5 0 0 1-5-5z" fill="#1c57c6"/><text x="5" y="40" class="w1">W</text></svg><div class="l">四年级数学上册<br>【分层作业】1.3<br>亿以内数的大小<br>比较（同步练...</div></div>
<div class="t" style="left:431px;top:162px"><svg class="i" viewBox="-10 0 66 72"><path class="pg" d="M1.5 1.5H40L54.5 16V70.5H1.5Z"/><path class="fd" d="M40 1.5V16H54.5"/><path class="ln" d="M38 38h11M38 44h11M38 50h11M8 63h41"/><rect x="-9" y="15" width="43" height="42" rx="5" fill="#2c6fdc"/><path d="M-9 47h43v5a5 5 0 0 1-5 5h-33a5 5 0 0 1-5-5z" fill="#1c57c6"/><text x="5" y="40" class="w1">W</text></svg><div class="l">四年级数学上册<br>【分层作业】1.4<br>亿以内数的改写<br>和近似数（同...</div></div>
<div class="t" style="left:537px;top:162px"><svg class="i" viewBox="-10 0 66 72"><path class="pg" d="M1.5 1.5H40L54.5 16V70.5H1.5Z"/><path class="fd" d="M40 1.5V16H54.5"/><path class="ln" d="M38 38h11M38 44h11M38 50h11M8 63h41"/><rect x="-9" y="15" width="43" height="42" rx="5" fill="#2c6fdc"/><path d="M-9 47h43v5a5 5 0 0 1-5 5h-33a5 5 0 0 1-5-5z" fill="#1c57c6"/><text x="5" y="40" class="w1">W</text></svg><div class="l">四年级数学上册<br>【分层作业】1.5<br>数的产生和十进<br>制（同步练习...</div></div>

<div class="t" style="left:7px;top:312px"><svg class="i" viewBox="-10 0 66 72"><path class="pg" d="M1.5 1.5H40L54.5 16V70.5H1.5Z"/><path class="fd" d="M40 1.5V16H54.5"/><path class="ln" d="M38 38h11M38 44h11M38 50h11M8 63h41"/><rect x="-9" y="15" width="43" height="42" rx="5" fill="#2c6fdc"/><path d="M-9 47h43v5a5 5 0 0 1-5 5h-33a5 5 0 0 1-5-5z" fill="#1c57c6"/><text x="5" y="40" class="w1">W</text></svg><div class="l">四年级数学上册<br>【分层作业】1.6<br>亿以上数的组成<br>和读写法（同...</div></div>
<div class="t" style="left:113px;top:312px"><svg class="i" viewBox="-10 0 66 72"><path class="pg" d="M1.5 1.5H40L54.5 16V70.5H1.5Z"/><path class="fd" d="M40 1.5V16H54.5"/><path class="ln" d="M38 38h11M38 44h11M38 50h11M8 63h41"/><rect x="-9" y="15" width="43" height="42" rx="5" fill="#2c6fdc"/><path d="M-9 47h43v5a5 5 0 0 1-5 5h-33a5 5 0 0 1-5-5z" fill="#1c57c6"/><text x="5" y="40" class="w1">W</text></svg><div class="l">四年级数学上册<br>【分层作业】1.7<br>亿以上数的改写<br>和近似数（同...</div></div>
<div class="t" style="left:219px;top:312px"><svg class="i" viewBox="-10 0 66 72"><path class="pg" d="M1.5 1.5H40L54.5 16V70.5H1.5Z"/><path class="fd" d="M40 1.5V16H54.5"/><path class="ln" d="M38 38h11M38 44h11M38 50h11M8 63h41"/><rect x="-9" y="15" width="43" height="42" rx="5" fill="#2c6fdc"/><path d="M-9 47h43v5a5 5 0 0 1-5 5h-33a5 5 0 0 1-5-5z" fill="#1c57c6"/><text x="5" y="40" class="w1">W</text></svg><div class="l">四年级数学上册<br>【分层作业】1.8<br>计算工具的认识<br>（同步练习）...</div></div>
<div class="t" style="left:325px;top:312px"><svg class="i" viewBox="-10 0 66 72"><path class="pg" d="M1.5 1.5H40L54.5 16V70.5H1.5Z"/><path class="fd" d="M40 1.5V16H54.5"/><path class="ln" d="M38 38h11M38 44h11M38 50h11M8 63h41"/><rect x="-9" y="15" width="43" height="42" rx="5" fill="#2c6fdc"/><path d="M-9 47h43v5a5 5 0 0 1-5 5h-33a5 5 0 0 1-5-5z" fill="#1c57c6"/><text x="5" y="40" class="w1">W</text></svg><div class="l">四年级数学上册<br>【分层作业】2.1<br>公顷和平方千米<br>（同步练习）...</div></div>
<div class="t" style="left:431px;top:312px"><svg class="i" viewBox="-10 0 66 72"><path class="pg" d="M1.5 1.5H40L54.5 16V70.5H1.5Z"/><path class="fd" d="M40 1.5V16H54.5"/><path class="ln" d="M38 38h11M38 44h11M38 50h11M8 63h41"/><rect x="-9" y="15" width="43" height="42" rx="5" fill="#2c6fdc"/><path d="M-9 47h43v5a5 5 0 0 1-5 5h-33a5 5 0 0 1-5-5z" fill="#1c57c6"/><text x="5" y="40" class="w1">W</text></svg><div class="l">四年级数学上册<br>【分层作业】3.1<br>线段直线射线（<br>同步练习）（...</div></div>
<div class="t" style="left:537px;top:312px"><svg class="i" viewBox="-10 0 66 72"><path class="pg" d="M1.5 1.5H40L54.5 16V70.5H1.5Z"/><path class="fd" d="M40 1.5V16H54.5"/><path class="ln" d="M38 38h11M38 44h11M38 50h11M8 63h41"/><rect x="-9" y="15" width="43" height="42" rx="5" fill="#2c6fdc"/><path d="M-9 47h43v5a5 5 0 0 1-5 5h-33a5 5 0 0 1-5-5z" fill="#1c57c6"/><text x="5" y="40" class="w1">W</text></svg><div class="l">四年级数学上册<br>【分层作业】3.2<br>角和角的度量（<br>同步练习）（...</div></div>

<div class="t" style="left:7px;top:462px"><svg class="i" viewBox="-10 0 66 72"><path class="pg" d="M1.5 1.5H40L54.5 16V70.5H1.5Z"/><path class="fd" d="M40 1.5V16H54.5"/><rect x="-9" y="15" width="43" height="42" rx="5" fill="#2c6fdc"/><text x="5" y="40" class="w1">W</text></svg></div>
<div class="t" style="left:113px;top:462px"><svg class="i" viewBox="-10 0 66 72"><path class="pg" d="M1.5 1.5H40L54.5 16V70.5H1.5Z"/><path class="fd" d="M40 1.5V16H54.5"/><rect x="-9" y="15" width="43" height="42" rx="5" fill="#2c6fdc"/><text x="5" y="40" class="w1">W</text></svg></div>
<div class="t" style="left:219px;top:462px"><svg class="i" viewBox="-10 0 66 72"><path class="pg" d="M1.5 1.5H40L54.5 16V70.5H1.5Z"/><path class="fd" d="M40 1.5V16H54.5"/><rect x="-9" y="15" width="43" height="42" rx="5" fill="#2c6fdc"/><text x="5" y="40" class="w1">W</text></svg></div>
<div class="t" style="left:325px;top:462px"><svg class="i" viewBox="-10 0 66 72"><path class="pg" d="M1.5 1.5H40L54.5 16V70.5H1.5Z"/><path class="fd" d="M40 1.5V16H54.5"/><rect x="-9" y="15" width="43" height="42" rx="5" fill="#2c6fdc"/><text x="5" y="40" class="w1">W</text></svg></div>
<div class="t" style="left:431px;top:462px"><svg class="i" viewBox="-10 0 66 72"><path class="pg" d="M1.5 1.5H40L54.5 16V70.5H1.5Z"/><path class="fd" d="M40 1.5V16H54.5"/><rect x="-9" y="15" width="43" height="42" rx="5" fill="#2c6fdc"/><text x="5" y="40" class="w1">W</text></svg></div>
<div class="t" style="left:537px;top:462px"><svg class="i" viewBox="-10 0 66 72"><path class="pg" d="M1.5 1.5H40L54.5 16V70.5H1.5Z"/><path class="fd" d="M40 1.5V16H54.5"/><rect x="-9" y="15" width="43" height="42" rx="5" fill="#2c6fdc"/><text x="5" y="40" class="w1">W</text></svg></div>
</div>

<!-- watermark -->
<div style="position:absolute;left:1700px;top:898px;font:44px 'Liberation Sans',sans-serif;color:rgba(255,255,255,0.88);letter-spacing:1px;text-shadow:0 0 2px rgba(0,0,0,0.15)">shipinquan.com</div>
<div style="position:absolute;left:1704px;top:952px;font:36px 'Liberation Sans','Noto Sans CJK SC',sans-serif;color:rgba(255,255,255,0.92);text-shadow:0 0 2px rgba(0,0,0,0.15);white-space:nowrap">百万资源免费下载</div>
</body></html>
